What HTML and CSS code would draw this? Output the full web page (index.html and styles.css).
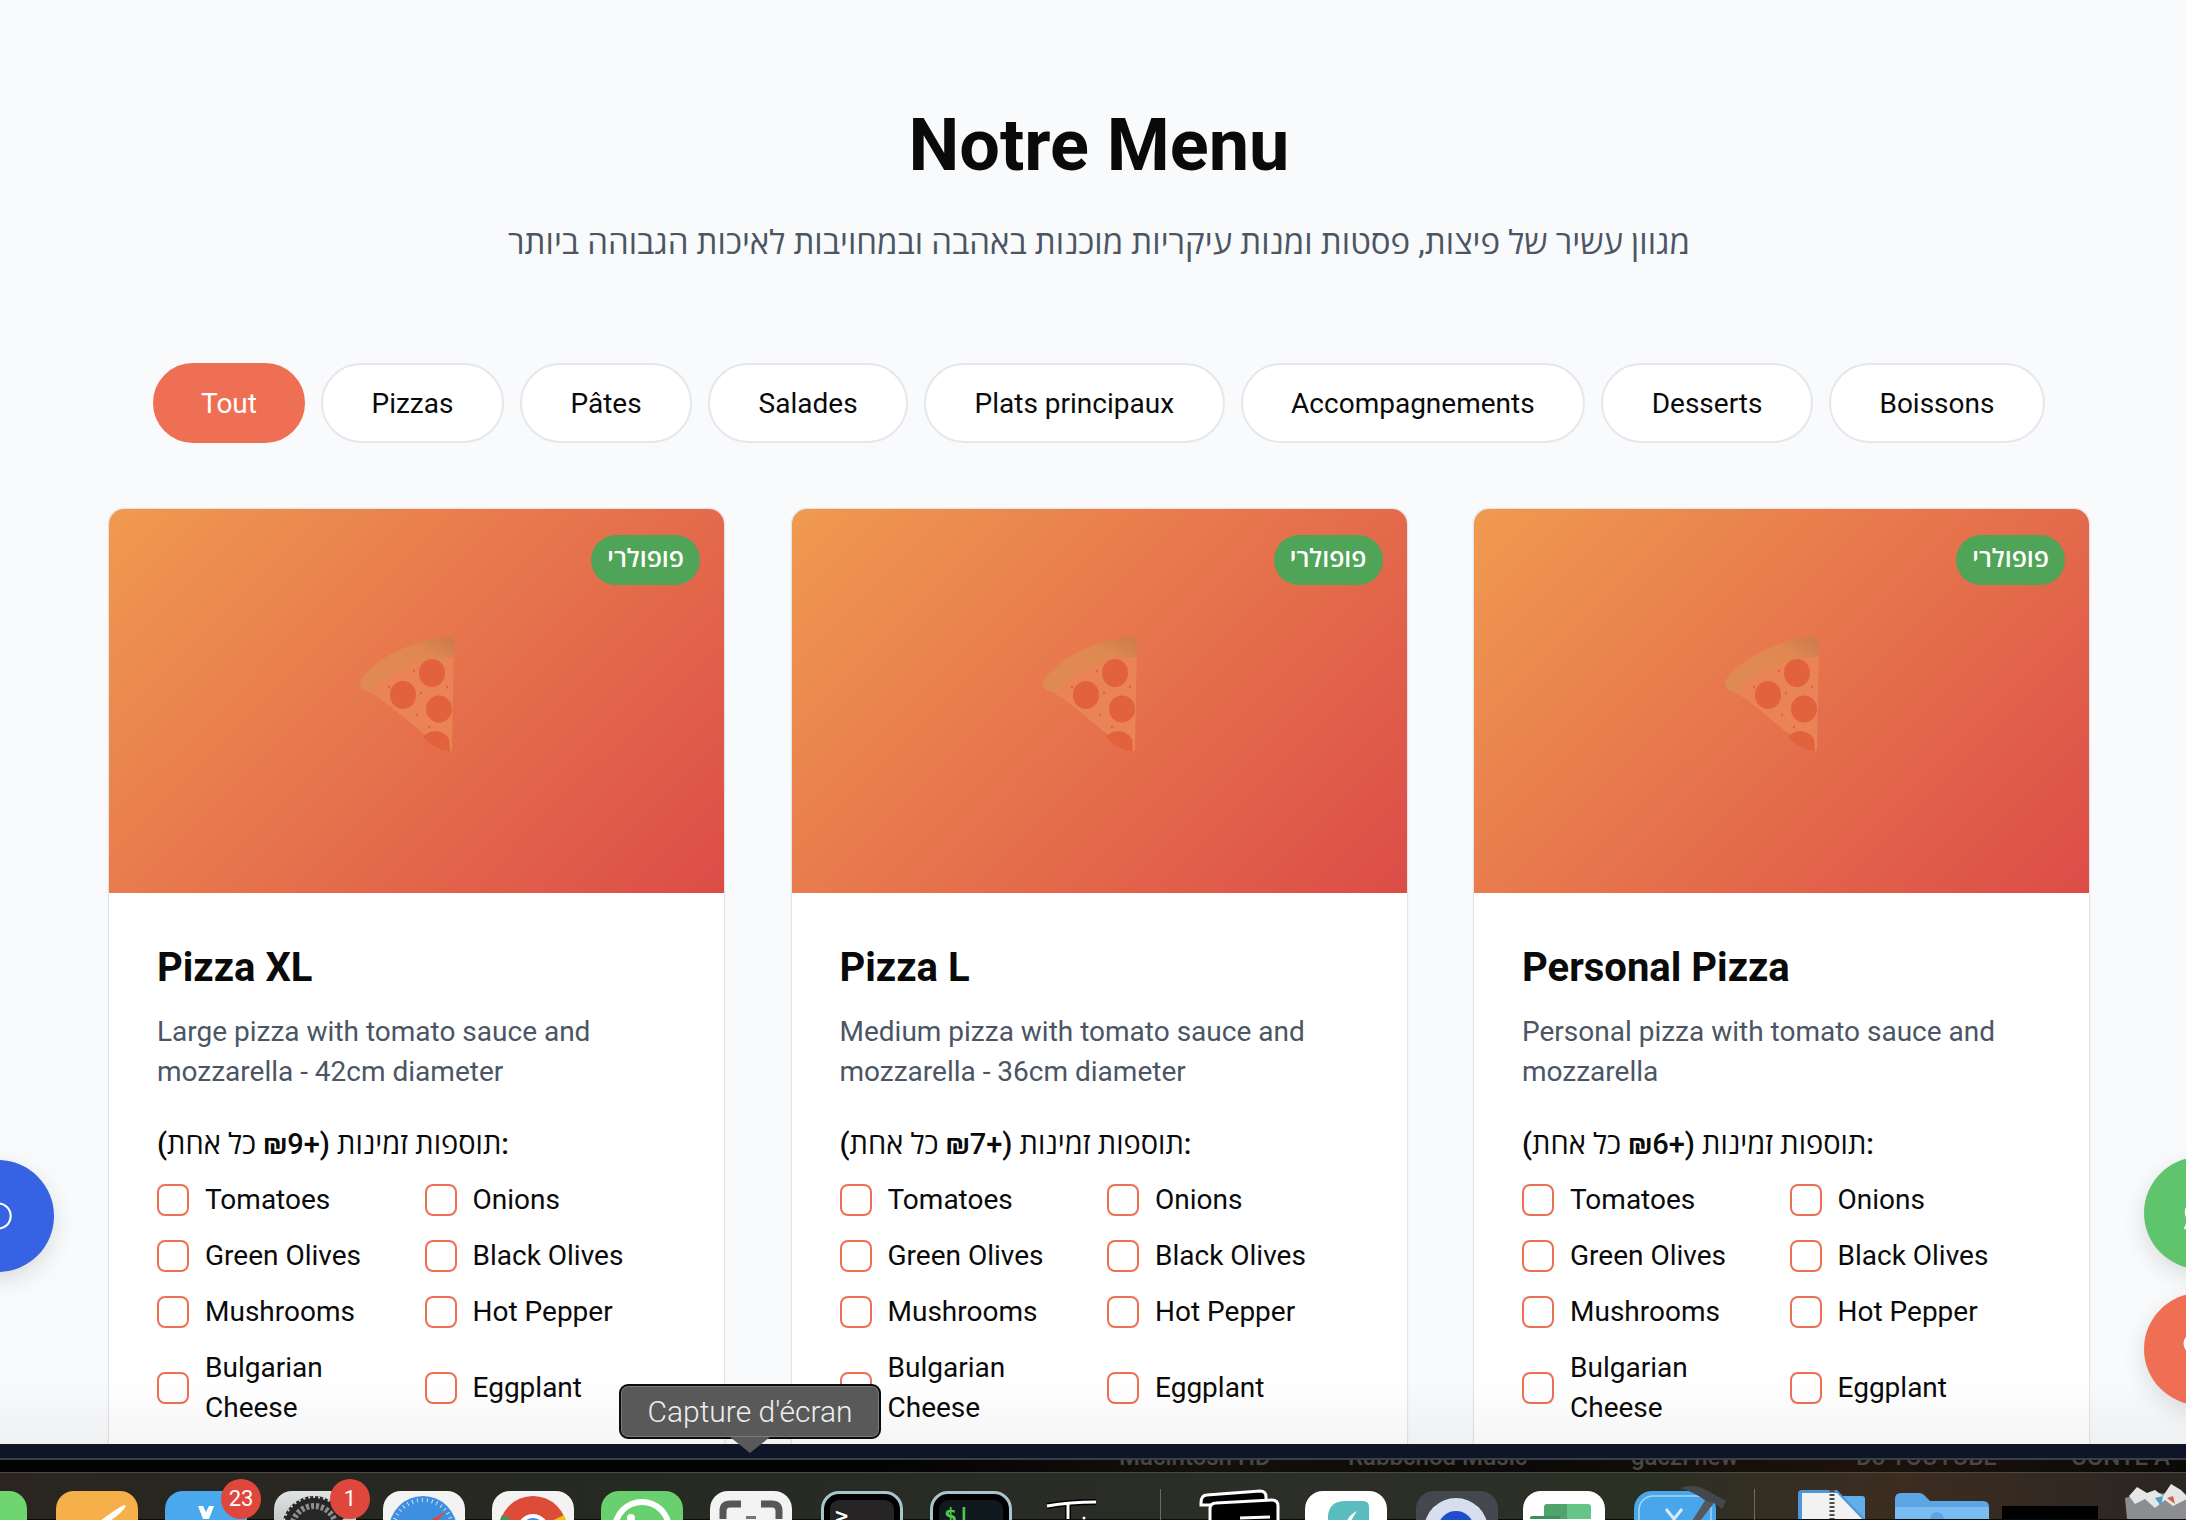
FILE: index.html
```html
<!DOCTYPE html>
<html lang="fr">
  <head>
    <meta charset="UTF-8" />
    <meta name="viewport" content="width=device-width, initial-scale=1.0" />
    <title>Notre Menu</title>
    <link rel="stylesheet" href="styles.css">
  </head>
  <body>
    <svg class="defs" width="0" height="0" aria-hidden="true">
      <defs>
        <linearGradient id="crust" x1="0" y1="1" x2="1" y2="0">
          <stop offset="0" stop-color="#df8a55"/>
          <stop offset="0.7" stop-color="#e08850"/>
          <stop offset="1" stop-color="#c97a4c"/>
        </linearGradient>
      </defs>
      <symbol id="slice" viewBox="0 0 96 116">
        <path d="M95 6 L93 112 C92 116 89 116 86 114 C62 96 30 66 9 54 L14 40 L90 6 Z" fill="#ea8355"/>
        <path d="M90 0 Q95 0 95 5 L95 20 C60 22 30 36 12 55 C6 56 0 50 1 44 C18 20 52 3 90 0 Z" fill="url(#crust)"/>
        <ellipse cx="73" cy="36" rx="13" ry="14" fill="#e2623d"/>
        <ellipse cx="44" cy="58" rx="13" ry="14" fill="#e2623d"/>
        <ellipse cx="80" cy="72" rx="13" ry="13.500" fill="#e2623d"/>
        <path d="M64 100 C70 92 84 92 90 102 L91 115 C84 114 74 110 64 100 Z" fill="#e2623d"/>
        <circle cx="55" cy="34" r="1.200" fill="#d9673f"/>
        <circle cx="62" cy="56" r="1.200" fill="#d9673f"/>
        <circle cx="88" cy="50" r="1.200" fill="#d9673f"/>
        <circle cx="58" cy="78" r="1.200" fill="#d9673f"/>
        <circle cx="70" cy="90" r="1.200" fill="#d9673f"/>
        <circle cx="30" cy="50" r="1.200" fill="#d9673f"/>
      </symbol>
    </svg>

    <main>
      <header class="page-head">
        <h1>Notre Menu</h1>
        <p dir="rtl">מגוון עשיר של פיצות, פסטות ומנות עיקריות מוכנות באהבה ובמחויבות לאיכות הגבוהה ביותר</p>
      </header>

      <nav class="filters">
        <button class="pill is-active">Tout</button>
        <button class="pill">Pizzas</button>
        <button class="pill">Pâtes</button>
        <button class="pill">Salades</button>
        <button class="pill">Plats principaux</button>
        <button class="pill">Accompagnements</button>
        <button class="pill">Desserts</button>
        <button class="pill">Boissons</button>
      </nav>

      <section class="cards">
        <article class="card">
          <div class="card-img">
            <span class="badge">פופולרי</span>
            <svg class="slice"><use href="#slice"/></svg>
          </div>
          <div class="card-body">
            <h2>Pizza XL</h2>
            <p class="desc">Large pizza with tomato sauce and mozzarella - 42cm diameter</p>
            <h3>תוספות זמינות (+₪9 כל אחת):</h3>
            <div class="extras">
              <label><i></i><span>Tomatoes</span></label>
              <label><i></i><span>Onions</span></label>
              <label><i></i><span>Green Olives</span></label>
              <label><i></i><span>Black Olives</span></label>
              <label><i></i><span>Mushrooms</span></label>
              <label><i></i><span>Hot Pepper</span></label>
              <label><i></i><span>Bulgarian Cheese</span></label>
              <label><i></i><span>Eggplant</span></label>
            </div>
          </div>
        </article>

        <article class="card">
          <div class="card-img">
            <span class="badge">פופולרי</span>
            <svg class="slice"><use href="#slice"/></svg>
          </div>
          <div class="card-body">
            <h2>Pizza L</h2>
            <p class="desc">Medium pizza with tomato sauce and mozzarella - 36cm diameter</p>
            <h3>תוספות זמינות (+₪7 כל אחת):</h3>
            <div class="extras">
              <label><i></i><span>Tomatoes</span></label>
              <label><i></i><span>Onions</span></label>
              <label><i></i><span>Green Olives</span></label>
              <label><i></i><span>Black Olives</span></label>
              <label><i></i><span>Mushrooms</span></label>
              <label><i></i><span>Hot Pepper</span></label>
              <label><i></i><span>Bulgarian Cheese</span></label>
              <label><i></i><span>Eggplant</span></label>
            </div>
          </div>
        </article>

        <article class="card">
          <div class="card-img">
            <span class="badge">פופולרי</span>
            <svg class="slice"><use href="#slice"/></svg>
          </div>
          <div class="card-body">
            <h2>Personal Pizza</h2>
            <p class="desc">Personal pizza with tomato sauce and mozzarella</p>
            <h3>תוספות זמינות (+₪6 כל אחת):</h3>
            <div class="extras">
              <label><i></i><span>Tomatoes</span></label>
              <label><i></i><span>Onions</span></label>
              <label><i></i><span>Green Olives</span></label>
              <label><i></i><span>Black Olives</span></label>
              <label><i></i><span>Mushrooms</span></label>
              <label><i></i><span>Hot Pepper</span></label>
              <label><i></i><span>Bulgarian Cheese</span></label>
              <label><i></i><span>Eggplant</span></label>
            </div>
          </div>
        </article>
      </section>
    </main>

    <!-- boutons flottants -->
    <div class="fab fab-blue">
      <svg viewBox="0 0 24 24" width="32" height="32"><circle cx="12" cy="12" r="9.500" fill="none" stroke="#fff" stroke-width="1.600"/></svg>
    </div>
    <div class="fab fab-green">
      <svg viewBox="0 0 24 24" width="36" height="36"><path d="M12 1.500a10 10 0 0 0-8.400 15.400L1 23l6.200-2.400A10 10 0 1 0 12 1.500z" fill="#fff"/></svg>
    </div>
    <div class="fab fab-red">
      <svg viewBox="0 0 24 24" width="36" height="36"><path d="M12 22C4 15.500 1 12 1 8a5.800 5.800 0 0 1 11-2.500A5.800 5.800 0 0 1 23 8c0 4-3 7.500-11 14z" fill="#fff"/></svg>
    </div>

    <div class="page-fade"></div>

    <div class="tooltip">Capture d'écran</div>

    <footer class="desk">
      <div class="desk-navy"></div>
      <div class="desk-labels">
        <span>Macintosh HD</span>
        <span>Rabbchod Music</span>
        <span>gaczi new</span>
        <span>Do YOUTUBE</span>
        <span>CONTE A</span>
      </div>
      <div class="dock">
        <div class="ico ico-green"></div>
        <div class="ico ico-orange">
          <svg viewBox="0 0 82 28"><path d="M68 14 Q60 18 44 30 L54 30 Q66 22 70 15 Z" fill="#fff"/></svg>
        </div>
        <div class="ico ico-blue">
          <span class="dock-badge">23</span>
          <svg viewBox="0 0 82 28"><path d="M33 15 L38 15 L41 21 L44 15 L49 15 L44 28 L38 28 Z" fill="#fff"/></svg>
        </div>
        <div class="ico ico-gray">
          <span class="dock-badge">1</span>
          <svg viewBox="0 0 82 28"><circle cx="40" cy="37" r="32" fill="#262626"/><circle cx="40" cy="37" r="31" fill="none" stroke="#d8d8d8" stroke-width="2" stroke-dasharray="2 3"/><circle cx="40" cy="37" r="22" fill="none" stroke="#8f8f8f" stroke-width="6" stroke-dasharray="3 2"/></svg>
        </div>
        <div class="ico ico-white">
          <svg viewBox="0 0 82 28"><circle cx="40" cy="39" r="34" fill="#3f8fe0"/><circle cx="40" cy="39" r="30" fill="none" stroke="#cfe4f7" stroke-width="4" stroke-dasharray="1 4"/><path d="M64 20 L46 30 L54 30 Z" fill="#e0483a"/></svg>
        </div>
        <div class="ico ico-white">
          <svg viewBox="0 0 82 28"><circle cx="41" cy="39" r="34" fill="#dd4b39"/><path d="M41 39 L72 24 A34 34 0 0 1 75 39 Z" fill="#f4c20d"/><path d="M41 39 L10 24 A34 34 0 0 0 7 39 Z" fill="#3f9a5f"/><circle cx="41" cy="39" r="16" fill="#fff"/><circle cx="41" cy="39" r="12" fill="#4285f4"/></svg>
        </div>
        <div class="ico ico-wa">
          <svg viewBox="0 0 82 28"><circle cx="41" cy="38" r="30" fill="#fff"/><circle cx="41" cy="38" r="24" fill="#69d06f"/><circle cx="30" cy="27" r="4" fill="#fff"/></svg>
        </div>
        <div class="ico ico-white">
          <svg viewBox="0 0 82 28"><path d="M13 28 V20 Q13 13 20 13 H31 M51 13 H62 Q69 13 69 20 V28" fill="none" stroke="#575757" stroke-width="7"/><rect x="36" y="25" width="10" height="3" fill="#777"/></svg>
        </div>
        <div class="ico ico-term"><span>&gt;</span></div>
        <div class="ico ico-term ico-iterm"><span>$|</span></div>
        <div class="ico-text">
          <svg viewBox="0 0 54 28"><path d="M2 15 Q25 11 51 11 M23 13 V28" fill="none" stroke="#000" stroke-width="6"/><path d="M2 15 Q25 11 51 11 M23 13 V28" fill="none" stroke="#fff" stroke-width="3"/><circle cx="39" cy="27" r="1.500" fill="#fff"/></svg>
        </div>
        <div class="dock-sep"></div>
        <div class="ico-stack">
          <svg viewBox="0 0 82 30"><path d="M3 14 Q3 6 9 6 L62 2 Q68 2 68 8 V16 H3 Z" fill="#000" stroke="#fff" stroke-width="3"/><path d="M12 34 V20 Q12 14 18 14 L74 11 Q80 11 80 17 V34 Z" fill="#000" stroke="#fff" stroke-width="3"/><path d="M42 29 L72 28" stroke="#fff" stroke-width="3"/></svg>
        </div>
        <div class="ico ico-bright ico-tight">
          <svg viewBox="0 0 82 28"><path d="M23 30 V24 Q25 10 40 10 H58 Q64 10 64 16 V30 Z" fill="#5bbcc0"/><path d="M42 30 Q44 24 52 20 Q48 26 46 30 Z" fill="#fff"/></svg>
        </div>
        <div class="ico ico-slate ico-loose">
          <svg viewBox="0 0 82 28"><circle cx="40" cy="39" r="32" fill="#d6def0"/><circle cx="40" cy="38" r="18" fill="#1f4fc8"/></svg>
        </div>
        <div class="ico ico-bright ico-tight">
          <svg viewBox="0 0 82 28"><path d="M21 28 V16 Q21 13 24 13 H44 V28 Z" fill="#4fa36b"/><path d="M44 13 H65 Q68 13 68 16 V28 H44 Z" fill="#66c487"/><path d="M7 28 V27 Q7 25 9 25 H37 V28 Z" fill="#3f8f5a"/></svg>
        </div>
        <div class="ico ico-xcode ico-loose">
          <svg viewBox="0 0 82 28"><rect x="5" y="5" width="72" height="40" rx="14" fill="none" stroke="#a5d6f7" stroke-width="1.500"/><path d="M32 18 L40 28 L48 18" fill="none" stroke="#d6ecfb" stroke-width="3"/><path d="M72 8 L80 12 L66 30 L58 30 Z" fill="#55585c"/><path d="M46 -3 Q60 -8 74 0 L92 10 L88 18 L80 12 L72 10 Q62 2 46 -3 Z" fill="#44474b"/></svg>
        </div>
        <div class="dock-sep dock-sep-2"></div>
        <div class="ico-doc">
          <svg viewBox="0 0 67 29"><path d="M39 6 H64 Q67 6 67 9 V29 H39 Z" fill="#62aee9"/><path d="M0 4 Q0 0 4 0 H39 L67 29 H0 Z" fill="#4d97d8"/><path d="M4 3 H39 L64 29 H4 Z" fill="#f2f2f2"/><path d="M34 0 V29" stroke="#4b4b4b" stroke-width="5" stroke-dasharray="2 2"/></svg>
        </div>
        <div class="ico-folder">
          <svg viewBox="0 0 94 26"><path d="M0 6 Q0 0 6 0 H24 Q28 0 31 4 L35 8 H88 Q94 8 94 14 V26 H0 Z" fill="#5da6e6"/><path d="M0 16 Q0 14 2 14 H92 Q94 14 94 16 V26 H0 Z" fill="#79bdf2"/><path d="M35 26 A7 7 0 0 1 49 26 Z" fill="#5da6e6"/></svg>
        </div>
        <div class="ico-black"></div>
        <div class="ico-trash">
          <svg viewBox="0 0 70 35"><path d="M2 14 Q35 4 68 14 L66 35 H4 Z" fill="#8b8d90"/><path d="M6 12 L14 3 L24 9 L32 6 L40 12 L48 0 L58 6 L66 14 L50 22 L42 16 L32 24 L22 15 L12 20 Z" fill="#e6e6e6"/><path d="M32 14 L40 12 L38 22 Z" fill="#4aa0c0"/><path d="M44 14 L50 12 L52 20 Z" fill="#c9663e"/></svg>
        </div>
      </div>
    </footer>
  </body>
</html>
```

FILE: styles.css
```css
*,
*::before,
*::after {
  box-sizing: border-box;
  margin: 0;
  padding: 0;
}
html {
  font-family: Roboto, "Open Sans", "Noto Sans", sans-serif;
}
body {
  position: relative;
  height: 100vh;
  overflow: hidden;
  background-color: #f9fafb;
  color: #0a0a0a;
}
.defs {
  position: absolute;
}
main {
  padding-inline: 108px 96px;
}

.page-head {
  padding-top: 101px;
  text-align: center;
  & h1 {
    font-size: 72px;
    line-height: 90px;
    font-weight: 700;
  }
  & p {
    margin-top: 31px;
    font-size: 33px;
    line-height: 42px;
    color: #4b5563;
  }
}

.filters {
  display: flex;
  justify-content: center;
  gap: 16px;
  margin-top: 99px;
}
.pill {
  height: 80px;
  padding-inline: 48.500px;
  border: 2px solid #e5e7eb;
  border-radius: 40px;
  background: #fff;
  font: 400 28px Roboto, sans-serif;
  color: #0a0a0a;
  &.is-active {
    padding-inline: 46px;
    background: #ef6f54;
    border-color: #ef6f54;
    color: #fff;
  }
}

.cards {
  display: grid;
  grid-template-columns: repeat(3, 617px);
  gap: 65.500px;
  margin-top: 65px;
}
.card {
  background: #fff;
  border-radius: 16px;
  border: 1px solid #e4e5e8;
  border-bottom: 0;
  box-shadow: 0 0 2px rgba(0, 0, 0, 0.08);
  overflow: hidden;
}
.card-img {
  position: relative;
  height: 384px;
  display: flex;
  align-items: center;
  justify-content: center;
  background: linear-gradient(135deg, #f09a50, #dc4c48);
}
.slice {
  width: 96px;
  height: 116px;
  margin-top: -12px;
  margin-left: -19px;
}
.badge {
  position: absolute;
  top: 26px;
  right: 24px;
  height: 50px;
  padding-inline: 16px;
  border-radius: 25px;
  background: #4fa457;
  color: #fff;
  font-size: 25px;
  font-weight: 600;
  line-height: 48px;
}

.card-body {
  padding: 51px 48px;
  & h2 {
    font-size: 40px;
    line-height: 48px;
    font-weight: 700;
  }
}
.desc {
  margin-top: 20px;
  font-size: 28px;
  line-height: 40px;
  color: #4b5563;
}
.card-body h3 {
  margin-top: 32px;
  font-size: 29px;
  line-height: 40px;
  font-weight: 500;
}
.extras {
  display: grid;
  grid-template-columns: 1fr 1fr;
  gap: 16px;
  margin-top: 16px;
  & label {
    display: flex;
    align-items: center;
    gap: 16px;
    font-size: 28px;
    line-height: 40px;
  }
  & i {
    flex: none;
    width: 32px;
    height: 32px;
    border: 2px solid #ef6f54;
    border-radius: 8px;
  }
}

.fab {
  position: absolute;
  width: 112px;
  height: 112px;
  border-radius: 50%;
  display: flex;
  align-items: center;
  justify-content: center;
  box-shadow: 0 8px 24px rgba(0, 0, 0, 0.12);
}
.fab-blue {
  left: -58px;
  top: 1160px;
  background: #3563e3;
}
.fab-green {
  left: 2144px;
  top: 1157px;
  background: #60c46c;
}
.fab-red {
  left: 2144px;
  top: 1293px;
  background: #ef6f54;
}

.page-fade {
  position: absolute;
  left: 0;
  right: 0;
  top: 1380px;
  height: 64px;
  background: linear-gradient(to bottom, transparent, rgba(0, 0, 0, 0.04));
}

.tooltip {
  position: absolute;
  left: 619px;
  top: 1384px;
  width: 262px;
  height: 55px;
  border: 2px solid #0c0c0c;
  border-radius: 9px;
  background: #595959;
  box-shadow: inset 0 0 0 1px #7a7a7a;
  color: #eee;
  font-size: 30px;
  font-weight: 300;
  line-height: 51px;
  text-align: center;
  z-index: 5;
  &::after {
    content: "";
    position: absolute;
    left: 109px;
    top: 100%;
    border: 20px solid transparent;
    border-top: 16px solid #595959;
    border-bottom: 0;
  }
}

.desk {
  position: absolute;
  left: 0;
  right: 0;
  top: 1444px;
  height: 76px;
  overflow: hidden;
  background: #0c0c0a;
}
.desk-navy {
  height: 16px;
  background: #0d1526;
  border-bottom: 2px solid #3a3e47;
}
.desk-labels {
  position: relative;
  height: 12px;
  overflow: hidden;
  color: #4a4845;
  font-size: 24px;
  line-height: 12px;
  font-weight: 500;
  background: linear-gradient(to right, #030303 40%, #14100c 55%, #0a0a08 70%, #1c130c 85%, #0a0a08);
  & span {
    position: absolute;
    top: -9px;
    white-space: nowrap;
  }
  & span:nth-child(1) { left: 1119px; }
  & span:nth-child(2) { left: 1348px; }
  & span:nth-child(3) { left: 1631px; }
  & span:nth-child(4) { left: 1856px; }
  & span:nth-child(5) { left: 2071px; }
}

/* le dock est coupe en bas du cadre */
.dock {
  display: flex;
  align-items: flex-start;
  gap: 27px;
  height: 47px;
  padding-top: 18px;
  border-top: 1px solid #4a4a46;
  background: linear-gradient(to right, #2a2520, #252a22 30%, #2c2e28 60%, #2b3024 75%, #3d2c20 87%, #2a2622);
  & svg {
    display: block;
    width: 100%;
    overflow: visible;
  }
}
.ico {
  position: relative;
  flex: none;
  width: 82px;
  height: 60px;
  border-radius: 18px;
}
.ico-green {
  margin-left: -55px;
  background: #6fd56e;
}
.ico-orange {
  margin-left: 2px;
  background: #f5b04a;
}
.ico-blue { background: #4aa8ec; }
.ico-gray { background: linear-gradient(#dfe3e4, #aab0b2); }
.ico-white { background: #f3f3f3; }
.ico-bright { background: #fff; }
.ico-wa { background: #69d06f; }
.ico-slate { background: #45474f; }
.ico-xcode { background: #4aa6ea; }
.ico-term {
  margin-left: 2px;
  background: #262424;
  border: 3px solid #a8c4cc;
  box-shadow: inset 0 0 0 6px #000;
  color: #fff;
  font: 700 22px/22px "DejaVu Sans Mono", monospace;
  padding: 11px 0 0 11px;
  & + .ico-term { margin-left: 0; }
}
.ico-iterm {
  color: #4ec94e;
  background: #101a1e;
}
.ico-text {
  flex: none;
  width: 54px;
  margin-left: 6px;
}
.dock-sep {
  flex: none;
  width: 1px;
  height: 40px;
  margin: -2px 0 0 34px;
  background: #6a6a66;
}
.dock-sep-2 { margin-left: 11px; }
.ico-stack {
  flex: none;
  width: 82px;
  margin: -2px 0 0 10px;
}
.ico-tight { margin-left: -2px; }
.ico-loose { margin-left: 2px; }
.ico-doc {
  flex: none;
  width: 67px;
  margin: -1px 0 0 16px;
}
.ico-folder {
  flex: none;
  width: 94px;
  margin: 2px 0 0 3px;
}
.ico-black {
  flex: none;
  width: 96px;
  height: 13px;
  margin: 15px 0 0 -14px;
  background: #000;
}
.ico-trash {
  flex: none;
  width: 70px;
  margin: -7px 0 0 -2px;
}
.dock-badge {
  position: absolute;
  right: -14px;
  top: -12px;
  width: 40px;
  height: 40px;
  border-radius: 50%;
  background: #e0473c;
  color: #fff;
  font-size: 22px;
  line-height: 40px;
  text-align: center;
  z-index: 2;
}
```
